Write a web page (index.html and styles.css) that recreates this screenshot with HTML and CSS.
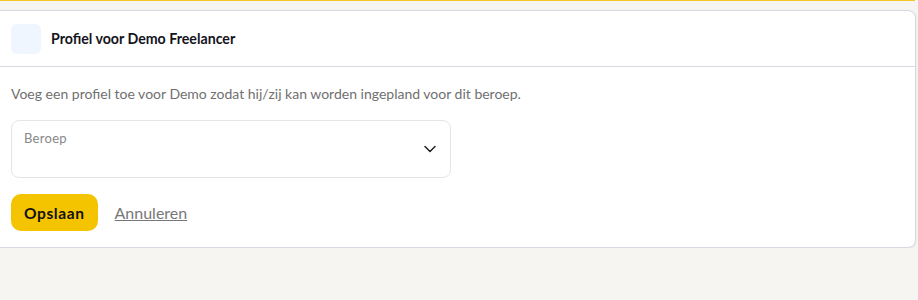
FILE: index.html
```html
<!DOCTYPE html>
<html lang="en">
<head>
    <meta charset="UTF-8">
    <meta name="viewport" content="width=device-width, initial-scale=1.0">
    <title>Profiel voor Demo Freelancer</title>
    <link rel="stylesheet" href="styles.css">
</head>
<body>
    <div class="top-line"></div>
    <div class="page">
        <div class="card">
            <div class="card-header">
                <div class="header-icon"></div>
                <h2>Profiel voor Demo Freelancer</h2>
            </div>
            <div class="card-body">
                <p class="intro">Voeg een profiel toe voor Demo zodat hij/zij kan worden ingepland voor dit beroep.</p>
                <div class="select-field">
                    <span class="select-label">Beroep</span>
                    <svg class="chevron" width="12" height="8" viewBox="0 0 12 8">
                        <path d="M1 1.5l5 5 5-5" fill="none" stroke="#222" stroke-width="1.5" stroke-linecap="round" stroke-linejoin="round"/>
                    </svg>
                </div>
                <div class="actions">
                    <button class="save-btn">Opslaan</button>
                    <a href="#" class="cancel-link">Annuleren</a>
                </div>
            </div>
        </div>
    </div>
</body>
</html>
```

FILE: styles.css
```css
body {
    margin: 0;
    background-color: #f6f5f2;
    font-family: Lato, "Open Sans", sans-serif;
    color: #1a1a24;
}

.top-line {
    height: 1px;
    width: 915px;
    background-color: #f3c623;
}

.page {
    padding-top: 9px;
    padding-right: 2px;
    overflow: hidden;
}

.card {
    margin-left: -10px;
    background-color: #fff;
    border: 1px solid #d9d8e0;
    border-radius: 0 8px 8px 0;
    box-shadow: 0 1px 3px rgba(0, 0, 0, 0.08);
}

.card-header {
    display: flex;
    align-items: center;
    gap: 10px;
    height: 55px;
    padding-left: 20px;
    border-bottom: 1px solid #d9d8e0;
}

.header-icon {
    width: 30px;
    height: 30px;
    border-radius: 6px;
    background-color: #eff6ff;
}

.card-header h2 {
    margin: 0;
    font-size: 14.2px;
    font-weight: 700;
    color: #141420;
}

.card-body {
    padding: 18px 0 16px 20px;
}

.intro {
    margin: 0 0 18px;
    font-size: 14px;
    color: #707070;
}

.select-field {
    position: relative;
    width: 438px;
    height: 56px;
    border: 1px solid #e5e5e5;
    border-radius: 8px;
}

.select-label {
    position: absolute;
    left: 12px;
    top: 9px;
    font-size: 13px;
    letter-spacing: 0.3px;
    color: #888;
}

.chevron {
    position: absolute;
    right: 14px;
    top: 24px;
}

.actions {
    display: flex;
    align-items: center;
    gap: 17px;
    margin-top: 16px;
}

.save-btn {
    height: 37px;
    padding: 0 13px;
    border: none;
    border-radius: 10px;
    background-color: #f5c400;
    color: #111;
    font-family: inherit;
    font-size: 15.5px;
    font-weight: 700;
    letter-spacing: 0.6px;
    cursor: pointer;
}

.cancel-link {
    font-size: 16px;
    color: #777;
    text-decoration: underline;
}
```
